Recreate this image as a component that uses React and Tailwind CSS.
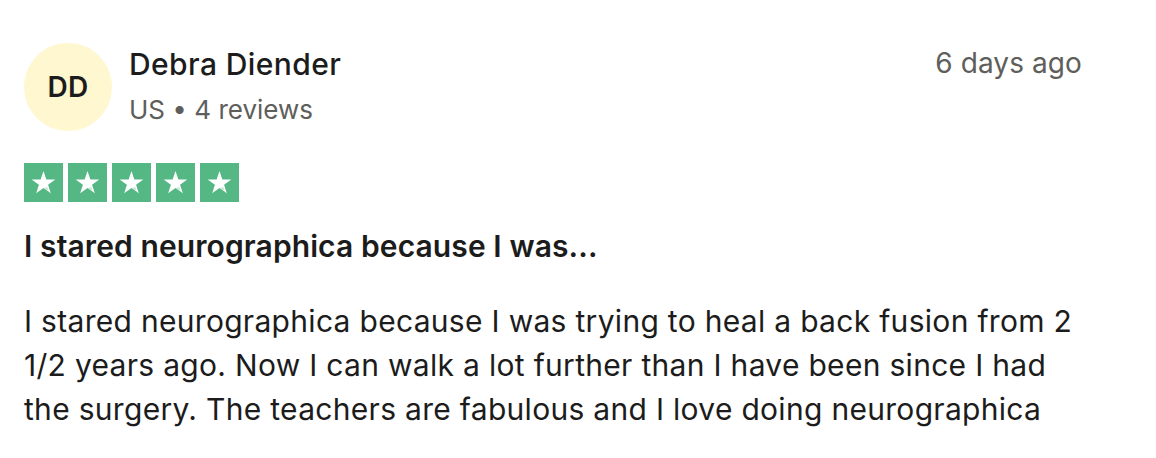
import React from "react";

const Star = () => (
  <div className="w-[39px] h-[39px] bg-[#54b784] flex items-center justify-center">
    <svg width="27" height="27" viewBox="0 0 24 24">
      <path
        d="M12 1.8l2.55 7.55h7.95l-6.43 4.67 2.45 7.6L12 16.95l-6.52 4.67 2.45-7.6L1.5 9.35h7.95z"
        fill="#ffffff"
      />
      <path d="M15.3 15.9l1.2 3.7-3.9-2.8z" fill="#54b784" opacity="0.35" />
    </svg>
  </div>
);

export default function App() {
  return (
    <div
      className="w-[1156px] h-[458px] bg-white text-[#1c1c1c]"
      style={{ fontFamily: "Inter, 'Noto Sans', sans-serif" }}
    >
      <div className="pl-6 pr-[74px] pt-[43px]">
        <div className="flex items-start justify-between">
          <div className="flex items-start gap-[17px]">
            <div className="w-[88px] h-[88px] rounded-full bg-[#fef7cf] flex items-center justify-center text-[28px] font-semibold text-[#1c1c1c] tracking-[0.3px]">
              DD
            </div>
            <div className="flex flex-col pt-[1px]">
              <div className="text-[30px] leading-[40px] font-medium text-[#1c1c1c] tracking-[0.4px]">
                Debra Diender
              </div>
              <div className="text-[26px] leading-[40px] text-[#5e5e5b] mt-[6px]">
                US • 4 reviews
              </div>
            </div>
          </div>
          <div className="text-[28px] leading-[40px] text-[#5e5e5b] tracking-[0.1px]">
            6 days ago
          </div>
        </div>

        <div className="flex gap-[5px] mt-[32px]">
          <Star />
          <Star />
          <Star />
          <Star />
          <Star />
        </div>

        <div className="mt-[24px] text-[30px] leading-[40px] font-semibold tracking-[0.1px]">
          I stared neurographica because I was...
        </div>

        <div className="mt-[33px] text-[30px] leading-[44px] tracking-[0.3px] text-[#1c1c1c]">
          I stared neurographica because I was trying to heal a back fusion from 2
          1/2 years ago. Now I can walk a lot further than I have been since I had
          the surgery. The teachers are fabulous and I love doing neurographica
        </div>
      </div>
    </div>
  );
}
